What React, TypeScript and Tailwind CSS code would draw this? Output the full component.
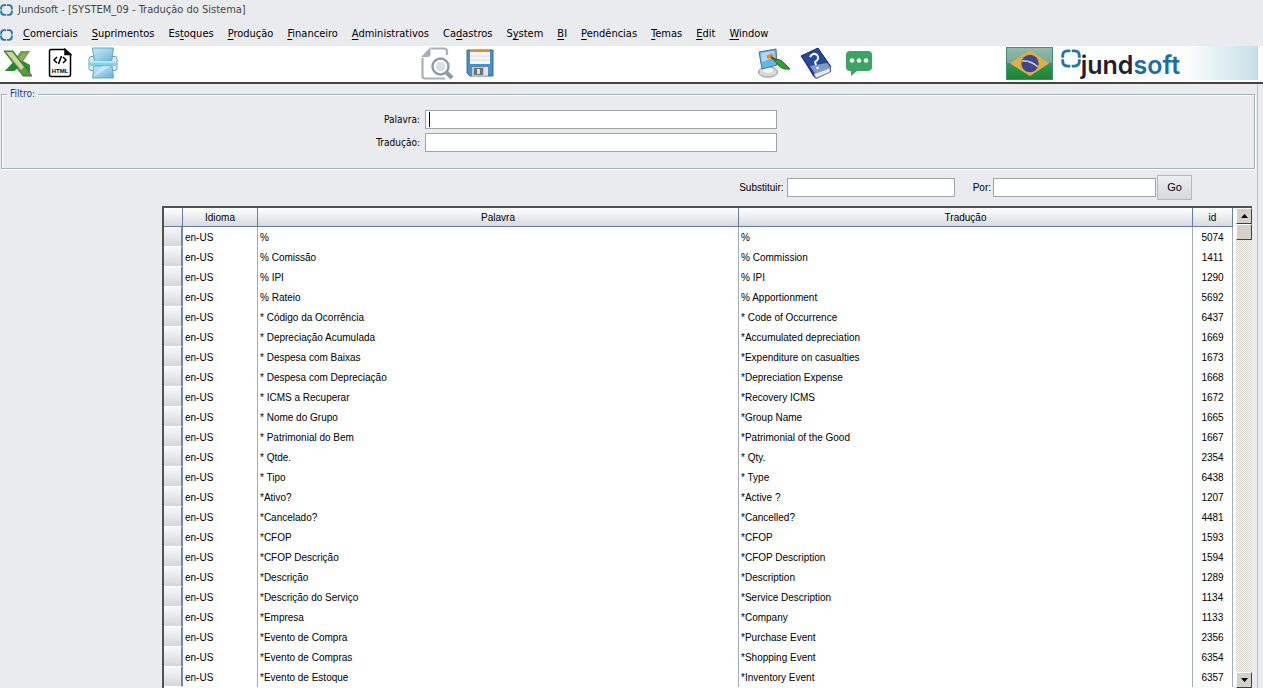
import React, { useState } from "react"

interface IMenuItem {
    label: string;
    hotkey: number;
}

interface ITranslation {
    word: string;
    translation: string;
    id: number;
}

const menuItems: IMenuItem[] = [
    { label: 'Comerciais', hotkey: 0 },
    { label: 'Suprimentos', hotkey: 0 },
    { label: 'Estoques', hotkey: 2 },
    { label: 'Produção', hotkey: 0 },
    { label: 'Financeiro', hotkey: 0 },
    { label: 'Administrativos', hotkey: 0 },
    { label: 'Cadastros', hotkey: 2 },
    { label: 'System', hotkey: 1 },
    { label: 'BI', hotkey: 0 },
    { label: 'Pendências', hotkey: 0 },
    { label: 'Temas', hotkey: 0 },
    { label: 'Edit', hotkey: 0 },
    { label: 'Window', hotkey: 0 },
]

const translations: ITranslation[] = [
    { word: '%', translation: '%', id: 5074 },
    { word: '% Comissão', translation: '% Commission', id: 1411 },
    { word: '% IPI', translation: '% IPI', id: 1290 },
    { word: '% Rateio', translation: '% Apportionment', id: 5692 },
    { word: '* Código da Ocorrência', translation: '* Code of Occurrence', id: 6437 },
    { word: '* Depreciação Acumulada', translation: '*Accumulated depreciation', id: 1669 },
    { word: '* Despesa com Baixas', translation: '*Expenditure on casualties', id: 1673 },
    { word: '* Despesa com Depreciação', translation: '*Depreciation Expense', id: 1668 },
    { word: '* ICMS a Recuperar', translation: '*Recovery ICMS', id: 1672 },
    { word: '* Nome do Grupo', translation: '*Group Name', id: 1665 },
    { word: '* Patrimonial do Bem', translation: '*Patrimonial of the Good', id: 1667 },
    { word: '* Qtde.', translation: '* Qty.', id: 2354 },
    { word: '* Tipo', translation: '* Type', id: 6438 },
    { word: '*Ativo?', translation: '*Active ?', id: 1207 },
    { word: '*Cancelado?', translation: '*Cancelled?', id: 4481 },
    { word: '*CFOP', translation: '*CFOP', id: 1593 },
    { word: '*CFOP Descrição', translation: '*CFOP Description', id: 1594 },
    { word: '*Descrição', translation: '*Description', id: 1289 },
    { word: '*Descrição do Serviço', translation: '*Service Description', id: 1134 },
    { word: '*Empresa', translation: '*Company', id: 1133 },
    { word: '*Evento de Compra', translation: '*Purchase Event', id: 2356 },
    { word: '*Evento de Compras', translation: '*Shopping Event', id: 6354 },
    { word: '*Evento de Estoque', translation: '*Inventory Event', id: 6357 },
]

const inputClass = "h-[19px] border border-[#a0a4a6] bg-white px-[3px] text-[10px] outline-none"

const RingIcon = ({ className }: { className: string }) => (
    <svg className={className} viewBox="0 0 14 13" fill="none" stroke="#2377a4" strokeWidth="2">
        <path d="M6.500 1.200H4.500Q1.200 1.200 1.200 4.500V6M7.500 1.200h2Q12.800 1.200 12.800 4.500V6M1.200 7v1.500Q1.200 11.800 4.500 11.800h2M12.800 7v1.500Q12.800 11.800 9.500 11.800h-2" />
    </svg>
)

const ExcelIcon = () => (
    <svg className="h-[28px] w-[29px]" viewBox="0 0 29 28">
        <path d="M18 2h9l-7 10 7 4v8h-7l-5-6-4 4H2l9-10z" fill="#2f8a34" />
        <path d="M18 2h9l-8 11-5-5z" fill="#63a850" />
        <path d="M20 4l4 1-6 7-2-3z" fill="#a4a565" />
        <path d="M1 2h9l19 25h-9z" fill="#5c9a3c" stroke="#317b2c" strokeWidth="1" />
        <path d="M3 3h6l12 15-3 3z" fill="#cfd3a3" />
        <path d="M2 22l9-8 4 5-4 3z" fill="#23872d" />
    </svg>
)

const HtmlIcon = () => (
    <svg className="h-[30px] w-[24px]" viewBox="0 0 24 30" fill="none" stroke="#000" strokeWidth="1.500">
        <path d="M3 1.500h14l5.500 5v20q0 2-2 2H3q-1.500 0-1.500-2V3.500q0-2 1.500-2z" />
        <path d="M17 1.500v5h5.500z" fill="#000" />
        <path d="M9 9l-3 3 3 3M15 9l3 3-3 3M13.500 8l-3 8" />
        <text x="12" y="24.500" textAnchor="middle" fontSize="6" fontWeight="bold" fontFamily="Liberation Sans, sans-serif" fill="#000" stroke="none">HTML</text>
    </svg>
)

const PrinterIcon = () => (
    <svg className="h-[32px] w-[30px]" viewBox="0 0 30 32">
        <defs>
            <linearGradient id="paper" x1="0" y1="0" x2="1" y2="1">
                <stop offset="0" stopColor="#c9edf9" />
                <stop offset="1" stopColor="#63b4dc" />
            </linearGradient>
        </defs>
        <rect x="1" y="9.500" width="28" height="14" rx="2" fill="#dcebf2" stroke="#779fb4" />
        <path d="M4.500 1h21l-2 14h-17z" fill="url(#paper)" stroke="#6da4bd" />
        <rect x="2" y="14" width="26" height="5" fill="#80d2ee" />
        <path d="M2 15h26" stroke="#e6fbff" />
        <path d="M6 19h18l1.500 12h-21z" fill="url(#paper)" stroke="#6da4bd" />
        <path d="M5 30l9-11h9z" fill="#daf3fb" opacity=".6" />
    </svg>
)

const PreviewIcon = () => (
    <svg className="h-[33px] w-[33px]" viewBox="0 0 33 33" fill="none">
        <path d="M10 1.500h13q3 0 3 3V8M1.500 11v18q0 2.500 2.500 2.500h20" stroke="#a6b2b8" strokeWidth="2.200" />
        <path d="M9.500 0v7q0 3-3 3H0z" fill="#a3b0b6" />
        <circle cx="19.500" cy="19.500" r="8" stroke="#8e9da5" strokeWidth="2.500" />
        <circle cx="19.500" cy="19.500" r="4.800" fill="#dadfe4" />
        <path d="M25 25l6 6" stroke="#8e9da5" strokeWidth="4" />
    </svg>
)

const SaveIcon = () => (
    <svg className="h-[28px] w-[28px]" viewBox="0 0 28 28">
        <path d="M1 1h26v26H4l-3-3z" fill="#4c8fc4" stroke="#376b94" />
        <path d="M4 1h20v14H4z" fill="#f5f7f8" />
        <path d="M4 1h20v2H4z" fill="#de8b30" />
        <path d="M4 7h20M4 11h20" stroke="#d7dcdf" />
        <path d="M6 18h16v9H6z" fill="#c4c6c8" />
        <path d="M8 19h9v7H8z" fill="#6e7377" />
        <path d="M11 20h3v5h-3z" fill="#d5e0e8" />
        <path d="M18 18h4v8h-4z" fill="#e6e6e6" />
    </svg>
)

const ThemeIcon = () => (
    <svg className="h-[30px] w-[32px]" viewBox="0 0 32 30">
        <ellipse cx="10" cy="24" rx="9.500" ry="5.200" fill="#d7dadd" stroke="#8f9499" />
        <ellipse cx="10" cy="22" rx="5" ry="3" fill="#f7f8f9" />
        <path d="M1 4l17-3 1 16-15 4z" fill="#60b7ed" stroke="#576f82" />
        <path d="M3 5l13-2 1 6-13 5z" fill="#a5ddfb" />
        <path d="M8 8l6-3 2 3-6 3z" fill="#e48927" />
        <path d="M13 9l6 4" stroke="#744a25" strokeWidth="2.500" />
        <path d="M16 12q4-2 8 1l8 8q-8 1-12-4z" fill="#379b31" stroke="#286d25" />
    </svg>
)

const HelpIcon = () => (
    <svg className="h-[32px] w-[32px]" viewBox="0 0 32 32">
        <path d="M1 9L18 1l13 19v5l-15 7-3-3z" fill="#292f75" />
        <path d="M1 9L18 1l13 19-17 7z" fill="#26499e" stroke="#27306f" />
        <path d="M10 19l17-3 4 5-16 6z" fill="#799dc6" />
        <path d="M14 27l16-6v4l-14 6z" fill="#e9edf2" stroke="#929eb3" strokeWidth=".7" />
        <path d="M10 10q3-5 7-2 3 4-2 7l1 3" fill="none" stroke="#fff" strokeWidth="2" />
        <circle cx="17.500" cy="21" r="1.200" fill="#fff" />
    </svg>
)

const ChatIcon = () => (
    <svg className="h-[26px] w-[26px]" viewBox="0 0 26 26">
        <path d="M4 1h18q4 0 4 4v12q0 4-4 4H11l-6 5v-5H4q-4 0-4-4V5q0-4 4-4z" fill="#38a565" />
        <g fill="#fff">
            <circle cx="6" cy="10.500" r="2.300" />
            <circle cx="13" cy="10.500" r="2.300" />
            <circle cx="20" cy="10.500" r="2.300" />
        </g>
    </svg>
)

const BrazilFlag = () => (
    <svg className="h-[33px] w-[47px]" viewBox="0 0 47 33">
        <defs>
            <linearGradient id="flag" x1="0" y1="0" x2="0" y2="1">
                <stop offset="0" stopColor="#91b9ae" />
                <stop offset=".47" stopColor="#74ac93" />
                <stop offset=".5" stopColor="#36945c" />
                <stop offset="1" stopColor="#15872a" />
            </linearGradient>
        </defs>
        <rect x=".5" y=".5" width="46" height="32" fill="url(#flag)" stroke="#3e8f78" />
        <path d="M4 16.500L24 3l19 13.500L24 29z" fill="#e2ad43" />
        <circle cx="24" cy="16.500" r="8.700" fill="#40458d" />
        <path d="M16 14q8-1 16 6" fill="none" stroke="#c2cad9" strokeWidth="1.500" />
    </svg>
)

const ToolButton = ({ label, children }: { label: string, children: React.ReactNode }) => (
    <button type="button" aria-label={label} className="flex items-center justify-center">
        {children}
    </button>
)

const ScrollButton = ({ direction }: { direction: 'up' | 'down' }) => (
    <button
        type="button"
        aria-label={direction === 'up' ? 'Rolar para cima' : 'Rolar para baixo'}
        className="flex h-4 w-4 shrink-0 items-center justify-center border border-t-white border-r-[#404040] border-b-[#404040] border-l-white bg-[#d4d0c8]"
    >
        <svg className="h-1 w-[7px]" viewBox="0 0 7 4">
            <path d={direction === 'up' ? "M0 4L3.500 0L7 4z" : "M0 0L3.500 4L7 0z"} fill="#000" />
        </svg>
    </button>
)

const MenuBar = () => (
    <nav className="flex h-[26px] shrink-0 items-center pt-[3px] text-[11px] text-black">
        <RingIcon className="mr-[10px] h-3 w-[13px]" />
        <div className="flex gap-x-[14px]">
            {
                menuItems.map((item) =>
                    <button type="button" key={item.label} className="whitespace-nowrap">
                        {item.label.slice(0, item.hotkey)}
                        <span className="underline underline-offset-2">{item.label[item.hotkey]}</span>
                        {item.label.slice(item.hotkey + 1)}
                    </button>
                )
            }
        </div>
    </nav>
)

const Toolbar = () => (
    <div className="flex h-[38px] shrink-0 border-b-2 border-[#444444] bg-white pb-[2px]">
        <div className="flex w-1/3 items-center gap-x-4 pl-[3px]">
            <ToolButton label="Exportar Excel"><ExcelIcon /></ToolButton>
            <ToolButton label="Exportar HTML"><HtmlIcon /></ToolButton>
            <ToolButton label="Imprimir"><PrinterIcon /></ToolButton>
        </div>
        <div className="flex w-4/15 items-center gap-x-3">
            <ToolButton label="Visualizar"><PreviewIcon /></ToolButton>
            <ToolButton label="Salvar"><SaveIcon /></ToolButton>
        </div>
        <div className="flex items-center gap-x-[10px]">
            <ToolButton label="Temas"><ThemeIcon /></ToolButton>
            <ToolButton label="Ajuda"><HelpIcon /></ToolButton>
            <div className="pl-1"><ToolButton label="Mensagens"><ChatIcon /></ToolButton></div>
        </div>
        <div className="mr-[5px] ml-auto flex items-center border-r border-[#c3ccd2]">
            <BrazilFlag />
            <div className="flex h-full items-start pl-2">
                <RingIcon className="mt-[3px] h-[19px] w-[20px]" />
                <span className="font-[family-name:Inter,sans-serif]">
                    <span className="text-[25px] leading-[38px] font-semibold text-[#22202c]">
                        jund<span className="text-[#1b6da5]">soft</span>
                    </span>
                </span>
            </div>
            <div className="h-full w-[77px] bg-linear-to-r from-white to-[#c9e0e8]" />
        </div>
    </div>
)

const FilterPanel = () => (
    <fieldset className="mr-[2px] ml-px h-[83px] shrink-0 border border-[#a6b0b8] text-[10px] shadow-[inset_1px_1px_0_#ffffff,1px_1px_0_#ffffff]">
        <legend className="ml-[5px] px-[3px] leading-4 text-[#0c3a9c]">Filtro:</legend>
        <div className="grid grid-cols-[1fr_352px_477px] items-center gap-y-1 pt-2">
            <label htmlFor="palavra" className="pr-[5px] text-right">Palavra:</label>
            <div className="flex h-[19px] items-center border border-[#a0a4a6] bg-white pl-[3px]">
                <span className="h-[15px] w-px bg-black" />
                <input id="palavra" className="h-full min-w-0 flex-1 outline-none" />
            </div>
            <span />
            <label htmlFor="traducao" className="pr-[5px] text-right">Tradução:</label>
            <input id="traducao" className={inputClass} />
        </div>
    </fieldset>
)

const ReplaceBar = () => {

    const [from, setFrom] = useState('');
    const [to, setTo] = useState('');

    return (
        <div className="flex shrink-0 items-center justify-end pt-[6px] pr-[65px] pb-[6px] font-[Liberation_Sans,Arial,sans-serif] text-[10px]">
            <label htmlFor="substituir" className="pr-[3px]">Substituir:</label>
            <input id="substituir" className={`${inputClass} w-[168px]`} value={from} onChange={(e) => setFrom(e.target.value)} />
            <label htmlFor="por" className="pr-[2px] pl-[18px]">Por:</label>
            <input id="por" className={`${inputClass} w-[163px]`} value={to} onChange={(e) => setTo(e.target.value)} />
            <button type="button" className="ml-px h-[25px] w-[35px] border border-[#b4b9bd] bg-linear-to-b from-[#eceef0] to-[#d4d8dc] text-[11px]">Go</button>
        </div>
    )
}

const TranslationTable = () => {

    const headClass = "border-r border-b border-[#647da3] bg-linear-to-b from-white to-[#d8dade] font-normal"
    const cellClass = "truncate border-r border-[#a3acb9] px-[2px]"

    return (
        <div className="mr-[5px] ml-[162px] flex min-h-0 flex-1 border-t-2 border-l-2 border-[#505254] bg-white font-[Liberation_Sans,Arial,sans-serif] text-[10px] text-black">
            <div className="min-w-0 flex-1 overflow-hidden">
                <table className="w-full table-fixed border-separate border-spacing-0">
                    <colgroup>
                        <col className="w-[19px]" />
                        <col className="w-[75px]" />
                        <col className="w-[45%]" />
                        <col />
                        <col className="w-[40px]" />
                    </colgroup>
                    <thead>
                        <tr className="h-[19px]">
                            <th className={headClass} aria-label="Linha" />
                            <th className={headClass}>Idioma</th>
                            <th className={headClass}>Palavra</th>
                            <th className={headClass}>Tradução</th>
                            <th className={headClass}>id</th>
                        </tr>
                    </thead>
                    <tbody>
                        {
                            translations.map((item) =>
                                <tr key={item.id} className="h-5">
                                    <td className="border-r-2 border-b border-r-[#7188aa] border-b-white bg-linear-to-b from-[#f7f8f9] to-[#d5d7dc]" />
                                    <td className={cellClass}>en-US</td>
                                    <td className={cellClass}>{item.word}</td>
                                    <td className={cellClass}>{item.translation}</td>
                                    <td className={`${cellClass} text-center`}>{item.id}</td>
                                </tr>
                            )
                        }
                    </tbody>
                </table>
            </div>
            <div className="ml-[3px] flex w-4 shrink-0 flex-col bg-[conic-gradient(#ffffff_25%,#d4d0c8_0_50%,#ffffff_0_75%,#d4d0c8_0)] bg-size-[2px_2px]">
                <ScrollButton direction="up" />
                <div className="h-4 w-4 border border-t-white border-r-[#404040] border-b-[#404040] border-l-white bg-[#d4d0c8]" />
                <div className="flex-1" />
                <ScrollButton direction="down" />
            </div>
        </div>
    )
}

const App = () => {

    return (
        <div className="flex h-screen flex-col overflow-hidden bg-[#eaebef] font-[DejaVu_Sans_Condensed,Tahoma,sans-serif]">
            <header className="flex h-5 shrink-0 items-center gap-x-[5px] text-[11px] text-[#444444]">
                <RingIcon className="h-3 w-[13px]" />
                <h1>Jundsoft - [SYSTEM_09 - Tradução do Sistema]</h1>
            </header>
            <MenuBar />
            <Toolbar />
            <main className="mr-[5px] flex min-h-0 flex-1 flex-col border-r border-[#b9c0c6] pt-[2px]">
                <FilterPanel />
                <ReplaceBar />
                <TranslationTable />
            </main>
        </div>
    )
};

export default App;
